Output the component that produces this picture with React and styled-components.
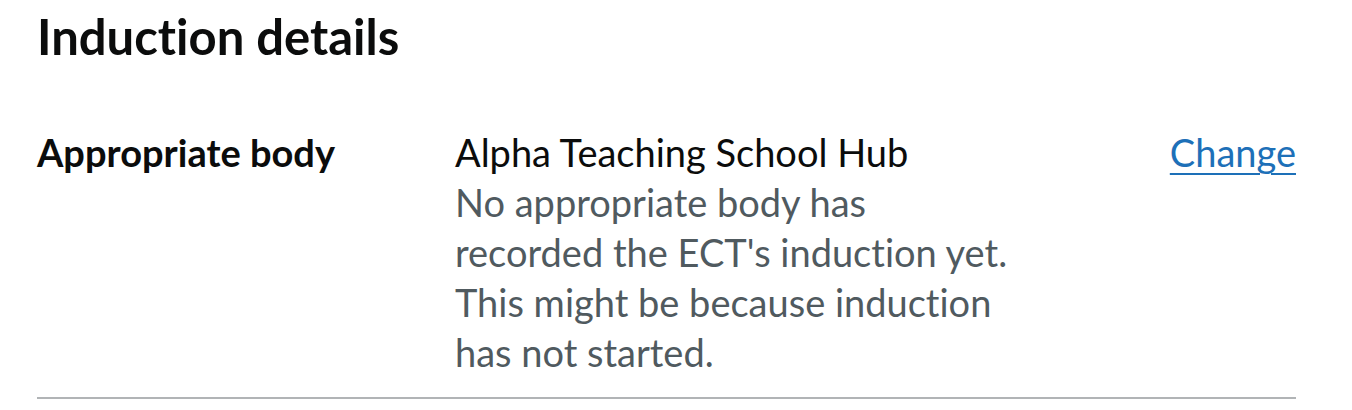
import styled, { createGlobalStyle } from "styled-components";

// Summary list: induction details

const GlobalStyle = createGlobalStyle`
  html, body {
    margin: 0;
    padding: 0;
    background: #ffffff;
  }
  body {
    font-family: Lato, "Noto Sans", "Liberation Sans", Arial, sans-serif;
    font-variant-ligatures: none;
    color: #0b0c0c;
    -webkit-font-smoothing: antialiased;
  }
`;

const Page = styled.main`
  padding: 6px 56px 0 37px;
`;

const Heading = styled.h2`
  margin: 0 0 41px;
  font-size: 49px;
  line-height: 60px;
  font-weight: 700;
  color: #0b0c0c;
`;

const List = styled.dl`
  margin: 0;
`;

const Row = styled.div`
  display: grid;
  grid-template-columns: 418px 1fr auto;
  padding: 20px 0 20px;
  border-bottom: 2px solid #b1b4b6;
`;

const Key = styled.dt`
  margin: 0;
  font-size: 38px;
  line-height: 50px;
  font-weight: 700;
`;

const Value = styled.dd`
  margin: 0;
  font-size: 38px;
  line-height: 50px;
`;

const Hint = styled.p`
  margin: 0;
  color: #505a5f;
`;

const Actions = styled.dd`
  margin: 0;
  font-size: 38px;
  line-height: 50px;
  text-align: right;
`;

const ActionLink = styled.a`
  color: #1d70b8;
  text-decoration: underline;
  text-decoration-thickness: 2px;
  text-underline-offset: 6px;
`;

const SummaryRow = ({ label, children, action }) => (
  <Row>
    <Key>{label}</Key>
    <Value>{children}</Value>
    <Actions>
      <ActionLink href="#">{action}</ActionLink>
    </Actions>
  </Row>
);

export default function App() {
  return (
    <>
      <GlobalStyle />
      <Page>
        <Heading>Induction details</Heading>
        <List>
          <SummaryRow label="Appropriate body" action="Change">
            Alpha Teaching School Hub
            <Hint>
              No appropriate body has
              <br />
              recorded the ECT's induction yet.
              <br />
              This might be because induction
              <br />
              has not started.
            </Hint>
          </SummaryRow>
        </List>
      </Page>
    </>
  );
}
